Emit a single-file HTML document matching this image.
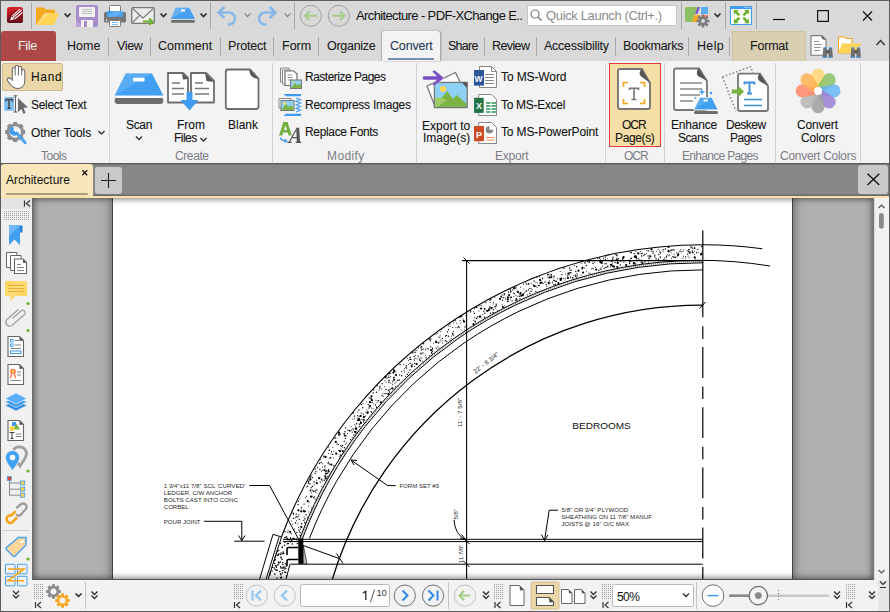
<!DOCTYPE html>
<html><head><meta charset="utf-8">
<style>
*{margin:0;padding:0;box-sizing:border-box}
html,body{width:890px;height:612px;overflow:hidden;background:#5c5c5c}
body{font-family:"Liberation Sans",sans-serif;font-size:12px;color:#1a1a1a;position:relative}
.a{position:absolute}
.t{position:absolute;white-space:nowrap;line-height:1}
svg{position:absolute;overflow:visible}
#title{left:1px;top:1px;width:888px;height:30px;background:#d9d9d9}
#tabs{left:1px;top:31px;width:888px;height:30px;background:#d9d9d9}
#ribbon{left:1px;top:61px;width:888px;height:102px;background:#f3f3f3}
#dtabs{left:1px;top:163px;width:888px;height:33px;background:repeating-conic-gradient(#818181 0 25%,#8f8f8f 0 50%) 0 0/2px 2px;box-shadow:inset 0 2px 2px -1px rgba(0,0,0,.45),inset 0 -2px 2px -1px rgba(0,0,0,.3)}
#yline{left:1px;top:196px;width:888px;height:2px;background:#f8e2aa}
#side{left:1px;top:198px;width:31px;height:413px;background:#f0f0f0}
#docbg{left:32px;top:198px;width:842px;height:382px;background:repeating-conic-gradient(#a9a9a9 0 25%,#b5b5b5 0 50%) 0 0/2px 2px}
#page{left:113px;top:198px;width:679px;height:381px;background:#fff;box-shadow:0 0 9px 2px rgba(0,0,0,.42),-1px 0 0 #5a5a5a,1px 0 0 #5a5a5a}
#vshade{left:32px;top:198px;width:842px;height:382px;box-shadow:inset 0 0 6px 1px rgba(0,0,0,.55);border-bottom:1px solid #555;border-left:1px solid #6a6a6a;border-right:1px solid #777}
#vscroll{left:874px;top:198px;width:15px;height:382px;background:#f1f1f1;border-left:1px solid #d8d8d8}
#bottom{left:32px;top:580px;width:857px;height:31px;background:#f2f2f2}
.sep{position:absolute;width:1px;background:#a8a8a8}
.gsep{position:absolute;width:1px;background:#d2d2d2;top:63px;height:99px}
.glab{position:absolute;top:150px;color:#7d7d86;font-size:12px;white-space:nowrap;line-height:1}
.tab{position:absolute;top:40px;font-size:12.5px;line-height:1;white-space:nowrap;color:#1a1a1a;-webkit-text-stroke:.08px #1a1a1a}
.rt{position:absolute;font-size:12px;line-height:1;white-space:nowrap;color:#111;-webkit-text-stroke:.08px #111}
</style></head><body>
<div class="a" id="title"></div>
<div class="a" id="tabs"></div>
<div class="a" id="ribbon"></div>
<div class="a" id="docbg"></div>

<div class="a" id="page"></div>
<!-- DRAWING -->
<svg style="left:0;top:0" width="890" height="580" viewBox="0 0 890 580">
<defs><clipPath id="pg"><rect x="113" y="198" width="679" height="381"/></clipPath></defs>
<g clip-path="url(#pg)">
<path d="M383.3 396.6h.01M426.2 357.4h.01M415.7 352.4h.01M486.5 310.5h.01M293.7 514.6h.01M516.0 295.6h.01M308.8 512.0h.01M536.0 286.0h.01M484.4 309.7h.01M636.7 259.9h.01M493.4 303.8h.01M616.3 254.7h.01M529.9 293.9h.01M516.5 286.1h.01M367.0 410.0h.01M294.6 529.1h.01M321.4 486.3h.01M321.9 479.2h.01M470.3 312.3h.01M388.8 375.8h.01M348.9 430.6h.01M364.0 422.6h.01M406.7 368.3h.01M515.5 300.5h.01M345.2 444.1h.01M307.5 517.3h.01M635.4 255.9h.01M312.1 477.7h.01M612.6 266.3h.01M676.5 252.8h.01M691.1 247.5h.01M581.9 268.7h.01M384.7 393.6h.01M459.7 327.6h.01M298.4 527.5h.01M539.4 276.9h.01M341.1 449.0h.01M648.9 250.9h.01M520.4 287.2h.01M523.6 284.2h.01M591.5 268.9h.01M674.1 250.2h.01M322.7 481.0h.01M692.2 250.3h.01M687.1 250.6h.01M667.3 254.7h.01M611.1 265.9h.01M371.5 408.0h.01M486.0 302.8h.01M464.8 329.7h.01M339.7 456.7h.01M473.7 311.8h.01M582.2 268.9h.01M574.3 265.5h.01M542.0 283.2h.01M437.6 333.2h.01M635.9 251.3h.01M474.5 308.8h.01M308.4 506.1h.01M322.5 463.9h.01M317.1 467.9h.01M441.3 329.7h.01M558.7 283.3h.01M429.5 355.7h.01M315.5 490.5h.01M586.5 271.1h.01M481.4 308.6h.01M298.1 504.7h.01M384.7 386.7h.01M364.2 419.3h.01M304.1 517.0h.01M453.3 334.9h.01M436.2 334.4h.01M606.7 263.8h.01M536.9 277.6h.01M612.9 258.7h.01M617.2 255.5h.01M436.1 347.9h.01M353.2 413.5h.01M473.7 320.4h.01M376.0 400.2h.01M401.7 371.5h.01M338.7 444.6h.01M363.5 421.2h.01M347.6 430.0h.01M570.4 270.3h.01M450.1 326.1h.01M610.1 260.9h.01M535.9 282.2h.01M450.1 340.2h.01M527.5 294.9h.01M561.5 279.7h.01M440.1 335.8h.01M503.8 297.5h.01M690.9 246.5h.01M321.5 471.3h.01M375.7 405.3h.01M663.1 251.2h.01M359.2 416.6h.01M671.0 252.8h.01M571.5 270.2h.01M440.0 341.7h.01M524.7 292.7h.01M409.6 370.0h.01M339.6 432.7h.01M353.4 430.2h.01M642.1 253.1h.01M414.1 359.4h.01M685.7 258.0h.01M508.6 291.8h.01M635.9 264.1h.01M493.8 312.6h.01M688.0 256.2h.01M325.0 465.5h.01M659.7 252.4h.01M546.6 286.4h.01M461.0 323.0h.01M344.4 433.8h.01M448.7 329.8h.01M354.6 418.8h.01M352.2 437.4h.01M415.4 355.3h.01M594.2 262.5h.01M334.2 438.7h.01M576.9 273.5h.01M451.4 336.1h.01M689.1 257.7h.01M303.4 511.0h.01M640.1 253.6h.01M668.2 250.3h.01M365.8 412.3h.01M388.6 377.3h.01M425.9 358.0h.01M393.9 370.2h.01M390.8 373.6h.01M304.5 522.8h.01M660.3 257.8h.01M648.8 257.9h.01M554.6 280.5h.01M329.5 450.2h.01M607.7 258.8h.01M383.0 393.4h.01M588.8 273.1h.01M573.2 275.3h.01M692.1 247.2h.01M363.8 420.9h.01M448.5 329.4h.01M531.2 283.3h.01M565.9 278.3h.01M698.8 252.4h.01M616.7 255.0h.01M373.1 408.8h.01M354.2 416.6h.01M379.0 390.1h.01M475.4 322.2h.01M392.9 381.1h.01M407.7 358.3h.01M513.7 288.6h.01M663.4 259.6h.01M597.6 258.5h.01M311.9 475.2h.01M610.4 266.8h.01M346.3 436.2h.01M408.5 364.4h.01M648.7 262.0h.01M576.4 277.3h.01M510.6 299.2h.01M488.8 308.7h.01M428.4 349.0h.01M425.8 349.8h.01M584.9 268.1h.01M453.5 331.5h.01M315.6 471.3h.01M560.2 271.4h.01M666.1 259.9h.01M448.5 325.8h.01M358.3 417.9h.01M325.6 456.8h.01M640.8 262.2h.01M353.4 412.6h.01M390.6 376.5h.01M328.5 453.5h.01M694.2 251.3h.01M322.4 467.1h.01M453.4 322.9h.01M394.8 383.1h.01M442.8 343.2h.01M356.1 429.2h.01M512.8 289.7h.01M518.8 293.2h.01M563.4 278.4h.01M297.9 518.0h.01M355.3 432.6h.01M452.7 327.5h.01M333.4 458.0h.01M293.6 513.5h.01M432.6 349.4h.01M569.8 270.0h.01M552.4 282.0h.01M420.9 348.8h.01M339.0 434.3h.01M360.6 421.4h.01M639.1 259.3h.01M525.6 282.3h.01M616.8 258.0h.01M421.9 349.1h.01M377.0 402.3h.01M300.0 498.9h.01M300.7 529.1h.01M391.1 388.6h.01M295.1 518.1h.01M542.7 278.8h.01M492.9 307.4h.01M605.6 257.6h.01M291.2 520.8h.01M422.7 361.3h.01M414.5 360.6h.01M386.1 382.2h.01M607.9 267.2h.01M595.9 269.8h.01M384.9 380.8h.01M545.1 281.4h.01M516.5 299.7h.01M392.5 381.9h.01M298.9 529.3h.01M650.0 255.5h.01M463.0 318.9h.01M519.7 294.2h.01M431.1 339.1h.01M338.4 450.5h.01M355.3 426.0h.01M689.4 249.4h.01M682.9 258.4h.01M694.1 248.4h.01M425.6 355.6h.01M297.8 523.8h.01M437.9 346.8h.01M408.4 360.3h.01M420.3 353.2h.01M432.5 348.0h.01M311.7 492.7h.01M418.7 356.7h.01M331.5 451.4h.01M404.4 368.7h.01M296.5 520.8h.01M585.5 261.9h.01M554.0 277.9h.01M403.3 364.5h.01M694.5 254.5h.01M417.0 358.8h.01M392.5 384.6h.01M564.5 268.2h.01M340.6 434.1h.01M346.6 443.0h.01M387.6 377.7h.01M340.5 455.5h.01M525.9 291.2h.01M358.8 427.0h.01M541.6 282.2h.01M361.9 419.7h.01M451.2 338.4h.01M322.7 470.3h.01M465.8 315.4h.01M618.0 261.0h.01M513.5 292.8h.01M440.9 331.6h.01M460.1 320.5h.01M423.8 353.1h.01M590.0 273.4h.01M660.6 252.9h.01M589.5 261.3h.01M503.7 297.7h.01M493.6 302.1h.01M529.2 288.4h.01M315.9 492.8h.01M581.8 263.3h.01M419.2 358.8h.01M440.8 339.9h.01M310.3 477.4h.01M556.3 280.9h.01M340.3 454.4h.01M550.6 274.2h.01M305.6 497.7h.01M683.5 249.8h.01M309.0 502.2h.01M323.9 457.4h.01M423.0 349.1h.01M595.6 267.4h.01M482.4 314.4h.01M381.6 388.9h.01M612.7 260.2h.01M416.9 350.4h.01M537.3 282.9h.01M601.2 267.2h.01M603.7 258.1h.01M599.7 261.9h.01M666.5 257.6h.01M352.8 419.1h.01M436.8 348.6h.01M647.0 250.5h.01M439.8 337.6h.01M461.1 330.1h.01M300.6 532.6h.01M354.8 415.9h.01M673.9 249.6h.01M683.4 256.3h.01M342.7 447.3h.01M299.0 514.4h.01M429.0 339.6h.01M309.9 478.2h.01M478.9 311.0h.01M320.7 459.5h.01M386.1 378.2h.01M670.1 251.1h.01M490.8 302.4h.01M555.5 281.9h.01M664.4 257.9h.01M298.0 510.6h.01M317.7 467.2h.01M308.1 480.8h.01M646.4 253.6h.01M442.7 340.7h.01M340.6 445.5h.01M363.0 403.2h.01M559.7 279.0h.01M288.1 530.2h.01M328.0 476.1h.01M552.6 282.9h.01M306.6 496.4h.01M365.4 416.1h.01M547.8 275.8h.01M602.6 266.1h.01M630.5 258.4h.01M497.3 310.6h.01M427.3 348.5h.01M551.3 274.5h.01M573.2 277.9h.01M685.5 256.6h.01M315.2 491.6h.01M485.3 309.1h.01M306.7 487.1h.01M304.2 520.1h.01M414.4 366.4h.01M629.5 263.3h.01M669.5 255.2h.01M671.1 249.7h.01M692.6 248.3h.01M603.4 258.8h.01M354.8 424.4h.01M394.5 377.3h.01M668.9 251.8h.01M640.3 251.4h.01M517.9 296.3h.01M508.2 301.2h.01M418.5 347.9h.01M356.8 429.9h.01M522.5 295.2h.01M433.4 343.1h.01M438.9 343.1h.01M629.7 262.0h.01M448.7 336.3h.01M366.6 401.9h.01M298.0 504.6h.01M303.9 510.2h.01M565.0 279.9h.01M680.8 249.6h.01M456.8 323.2h.01M634.9 264.5h.01M634.6 256.1h.01M430.6 347.0h.01M369.8 406.6h.01M404.3 372.0h.01M615.3 254.7h.01M415.8 350.8h.01M659.8 250.7h.01M701.9 252.2h.01M533.5 285.6h.01M481.8 305.6h.01M605.9 267.6h.01M691.1 248.0h.01M605.9 256.2h.01M455.9 327.7h.01M331.6 451.8h.01M371.5 398.1h.01M369.0 397.6h.01M416.7 364.6h.01M485.3 302.3h.01M648.2 251.3h.01M494.9 297.2h.01M676.1 256.8h.01M355.8 429.1h.01M328.5 447.1h.01M481.2 318.0h.01M404.0 370.7h.01M312.6 477.6h.01M355.5 433.0h.01M389.7 389.7h.01M312.6 496.3h.01M557.3 278.7h.01M335.3 437.6h.01M347.4 433.5h.01M502.2 304.8h.01M316.7 480.2h.01M357.8 412.3h.01M523.9 289.1h.01M408.7 372.5h.01M452.5 333.4h.01M378.0 400.8h.01M554.8 280.9h.01M653.6 251.3h.01M292.7 524.2h.01M390.8 383.4h.01M388.8 380.9h.01M309.3 480.8h.01M405.6 376.3h.01M516.8 298.1h.01M421.3 350.3h.01M284.7 537.7h.01M371.4 412.5h.01M656.7 251.3h.01M543.2 283.6h.01M612.2 264.7h.01M674.1 254.4h.01M544.9 282.5h.01M664.8 259.2h.01M295.3 517.1h.01M357.3 418.2h.01M548.1 277.8h.01M351.2 426.8h.01M668.6 255.8h.01M641.8 261.5h.01M577.4 275.1h.01M396.2 382.0h.01M367.8 413.3h.01M431.8 352.1h.01M311.5 508.0h.01M473.6 324.3h.01M517.2 291.2h.01M327.3 476.6h.01M617.8 263.4h.01M512.8 290.0h.01M474.7 317.8h.01M508.2 292.6h.01M453.3 335.3h.01M328.6 461.9h.01M315.1 499.3h.01M332.9 447.3h.01M617.0 255.8h.01M457.8 327.7h.01M423.1 349.3h.01M652.0 259.9h.01M425.8 348.9h.01M342.2 450.6h.01M629.9 251.8h.01M533.1 284.5h.01M479.9 305.5h.01M520.5 294.6h.01M415.1 358.4h.01M410.9 369.9h.01M629.8 261.8h.01M477.0 318.7h.01M314.2 484.8h.01M551.6 275.2h.01M612.7 263.1h.01M681.3 252.0h.01M316.8 471.7h.01M351.4 430.1h.01M495.7 308.2h.01M549.5 280.8h.01M658.1 249.5h.01M569.1 275.2h.01M395.8 371.9h.01M359.2 424.2h.01M299.5 532.0h.01M333.4 451.2h.01M539.6 285.2h.01M390.1 389.4h.01M634.4 253.5h.01M620.5 261.5h.01M504.3 305.8h.01M338.6 434.5h.01M303.2 520.5h.01M436.1 340.6h.01M395.7 386.6h.01M695.6 258.9h.01M532.1 289.9h.01M634.0 253.9h.01M513.9 296.7h.01M592.9 260.9h.01M537.1 287.4h.01M565.4 274.1h.01M431.0 346.8h.01M375.5 404.9h.01M373.7 403.9h.01M660.5 253.2h.01M331.1 453.9h.01M389.2 377.6h.01M548.9 284.0h.01M683.0 251.4h.01M600.3 259.1h.01M324.6 476.3h.01M636.0 255.5h.01M389.3 392.1h.01M439.0 348.2h.01M314.4 496.7h.01M581.1 275.1h.01M417.8 355.9h.01M549.9 275.8h.01M432.5 348.6h.01M671.5 258.6h.01M438.9 337.1h.01M575.7 276.7h.01" stroke="#000" stroke-width="1.0" stroke-linecap="round" opacity="1"/>
<path d="M304.1 504.1h.01M344.0 433.8h.01M327.6 473.3h.01M606.0 267.5h.01M490.0 307.6h.01M593.0 263.4h.01M324.8 466.9h.01M528.2 284.3h.01M635.0 263.4h.01M630.7 261.3h.01M328.6 469.8h.01M535.8 291.5h.01M584.8 263.0h.01M313.4 491.4h.01M356.6 423.8h.01M313.9 491.2h.01M694.6 247.6h.01M605.4 259.8h.01M397.7 380.3h.01M570.9 272.7h.01M687.7 254.1h.01M601.1 269.1h.01M475.2 321.3h.01M654.9 257.0h.01M658.8 254.5h.01M330.7 457.7h.01M477.4 316.9h.01M502.5 300.2h.01M325.6 476.6h.01M528.7 283.8h.01M328.1 463.0h.01M388.4 390.2h.01M694.7 248.5h.01M414.0 352.3h.01M298.4 501.4h.01M598.8 270.5h.01M370.1 398.2h.01M296.9 532.5h.01M561.9 274.6h.01M615.0 262.6h.01M412.0 364.5h.01M324.4 480.3h.01M359.8 424.1h.01M304.9 522.4h.01M638.4 258.6h.01M519.9 298.7h.01M644.8 254.4h.01M604.1 268.5h.01M307.7 486.3h.01M569.8 272.7h.01M359.8 426.3h.01M326.6 470.8h.01M305.3 511.6h.01M540.6 280.5h.01M458.4 326.7h.01M430.3 340.8h.01M673.9 257.4h.01M315.1 473.3h.01M641.9 253.7h.01M648.1 255.9h.01M290.5 538.3h.01M373.2 392.9h.01M569.7 268.0h.01M369.0 408.0h.01M305.1 518.7h.01M361.3 404.4h.01M393.8 369.6h.01M602.4 262.0h.01M296.2 514.0h.01M293.2 513.0h.01M563.1 268.1h.01M335.8 438.1h.01M432.3 351.2h.01M389.4 391.9h.01M423.6 343.7h.01M548.3 274.4h.01M663.2 249.6h.01M671.2 250.4h.01M293.3 518.6h.01M321.5 479.8h.01M372.1 402.4h.01M515.8 288.0h.01M352.2 432.1h.01M607.8 266.4h.01M414.1 356.8h.01M666.4 256.3h.01M528.4 289.9h.01M386.0 393.4h.01M310.8 476.4h.01M410.2 357.4h.01M680.0 251.4h.01M286.5 536.7h.01M510.3 289.8h.01M349.2 430.5h.01M421.0 354.1h.01M295.5 522.9h.01M350.0 430.9h.01M529.7 293.1h.01M368.2 404.5h.01M356.6 428.5h.01M312.1 490.2h.01M688.3 251.5h.01M311.2 487.7h.01M345.4 438.4h.01M342.6 445.4h.01M378.6 400.6h.01M406.4 365.7h.01M313.7 497.7h.01M414.7 363.4h.01M677.9 255.7h.01M701.0 254.4h.01M333.8 465.8h.01M325.8 471.3h.01M446.8 341.6h.01M400.1 364.7h.01M612.7 266.0h.01M320.3 482.1h.01M314.2 482.0h.01M505.6 298.9h.01M576.6 266.7h.01M332.7 454.4h.01M693.0 252.7h.01M658.3 259.3h.01M575.3 275.9h.01M358.9 410.0h.01M301.6 523.8h.01M463.5 320.5h.01M511.4 297.4h.01M607.7 266.1h.01M345.0 431.8h.01M292.4 539.6h.01M493.3 309.7h.01M291.2 533.6h.01M555.4 284.6h.01M353.9 435.0h.01M357.6 415.6h.01M672.9 250.0h.01M653.1 253.3h.01M631.3 252.4h.01M316.9 489.9h.01M511.0 291.2h.01M371.1 411.6h.01M575.7 275.1h.01M362.7 407.7h.01M373.7 389.8h.01M290.6 538.0h.01M672.9 256.4h.01M542.6 278.2h.01M645.0 261.9h.01M641.3 260.3h.01M321.1 462.5h.01M620.3 264.9h.01M329.3 464.0h.01M316.9 490.0h.01M542.1 282.5h.01M419.7 360.0h.01M410.9 359.4h.01M310.4 490.1h.01M611.7 261.5h.01M675.2 257.3h.01M363.4 414.1h.01M601.1 262.3h.01M480.7 316.5h.01M389.1 380.4h.01M605.1 263.7h.01M475.1 321.5h.01M401.7 375.7h.01M442.4 338.4h.01M651.9 251.3h.01M612.6 259.7h.01M285.0 531.7h.01M345.6 427.9h.01M319.5 463.3h.01M324.0 456.3h.01M586.2 265.5h.01M589.2 262.4h.01M421.1 347.0h.01M526.3 284.0h.01M412.2 353.0h.01M377.1 385.8h.01M554.0 276.3h.01M629.3 260.3h.01M410.2 363.2h.01M449.9 323.9h.01M593.0 268.5h.01M641.6 256.0h.01M376.6 407.2h.01M480.5 316.1h.01M484.4 317.2h.01M432.0 353.7h.01M489.9 300.2h.01M519.6 296.3h.01M300.1 535.3h.01M430.1 339.0h.01M303.7 511.4h.01M511.3 297.2h.01M587.9 261.2h.01M688.7 249.8h.01M359.3 418.6h.01M613.1 257.2h.01M484.9 313.3h.01M393.6 377.5h.01M510.6 292.0h.01M496.2 305.9h.01M631.3 258.3h.01M301.4 507.7h.01M530.9 288.6h.01M350.6 439.6h.01M306.1 514.8h.01M382.2 395.5h.01M445.3 340.8h.01M319.9 469.5h.01M630.8 252.8h.01M431.6 352.6h.01M618.4 258.7h.01M382.2 383.7h.01M512.1 300.9h.01M448.3 336.1h.01M701.8 246.5h.01M464.9 326.9h.01M656.1 258.7h.01M325.1 475.7h.01M344.5 447.8h.01M410.0 359.3h.01M654.8 255.3h.01M363.1 419.4h.01M399.2 380.0h.01M376.4 392.2h.01M678.2 253.2h.01M301.5 527.6h.01M452.8 333.5h.01M570.4 277.3h.01M617.3 260.3h.01M352.9 428.9h.01M455.0 320.8h.01M422.1 352.9h.01M315.0 468.9h.01M361.4 413.1h.01M371.4 399.1h.01M490.9 299.3h.01M617.1 259.2h.01M493.0 312.8h.01M386.0 389.5h.01M502.2 295.1h.01M575.8 271.3h.01M547.7 274.4h.01M489.9 307.0h.01M483.9 311.6h.01M622.6 259.7h.01M484.4 308.7h.01M660.3 256.9h.01M298.2 516.1h.01M538.6 285.5h.01M495.0 306.5h.01M399.6 374.9h.01M445.4 336.1h.01M700.7 254.7h.01M308.3 483.2h.01M420.3 360.8h.01M299.3 519.6h.01M531.1 291.4h.01M476.4 318.4h.01M577.1 276.1h.01M329.5 458.1h.01M500.9 296.4h.01M287.9 532.2h.01M553.8 280.2h.01M364.2 420.1h.01M407.3 374.3h.01M507.7 301.5h.01M665.3 249.0h.01M556.0 281.4h.01M318.9 478.4h.01M600.2 269.1h.01M549.8 283.0h.01M623.8 261.9h.01M312.5 486.4h.01M629.6 263.5h.01M546.2 284.6h.01M553.8 284.7h.01M309.9 483.7h.01M510.3 297.1h.01M514.3 293.8h.01M303.8 511.6h.01M341.2 446.1h.01M380.0 386.2h.01M496.2 304.2h.01M438.3 342.7h.01M572.6 277.8h.01M692.2 251.7h.01M446.4 335.4h.01M523.3 294.0h.01M567.5 275.9h.01M610.3 264.6h.01M356.1 432.0h.01M490.4 313.2h.01M421.0 357.9h.01M429.7 338.6h.01M504.2 294.7h.01M535.0 286.1h.01M526.5 290.9h.01M643.9 255.6h.01M466.3 324.9h.01M421.7 346.8h.01M697.8 249.4h.01M504.4 293.7h.01M534.0 281.0h.01M310.4 490.9h.01M308.5 481.8h.01M616.3 259.7h.01M636.2 256.8h.01M599.4 258.3h.01M329.2 450.3h.01M406.0 367.5h.01M452.6 334.0h.01M459.9 317.6h.01M295.4 522.7h.01M389.0 382.4h.01M696.6 252.7h.01M355.1 428.6h.01M326.8 478.1h.01M470.7 311.2h.01M633.4 263.8h.01M649.2 258.7h.01M299.1 530.6h.01M337.2 444.0h.01M344.2 441.2h.01M296.8 516.7h.01M447.5 331.9h.01M501.8 297.2h.01M474.4 313.4h.01M379.7 388.0h.01" stroke="#000" stroke-width="1.4" stroke-linecap="round"/>
<path d="M301.3 511.3h.01M561.2 278.6h.01M316.8 483.2h.01M396.0 375.1h.01M540.6 282.9h.01M436.2 342.2h.01M473.5 324.0h.01M359.3 419.9h.01M668.5 246.9h.01M358.1 420.2h.01M479.7 316.7h.01M338.9 432.5h.01M507.9 297.4h.01M361.0 422.9h.01M298.6 510.3h.01M355.0 431.8h.01M367.7 412.4h.01M694.7 257.4h.01M301.2 526.8h.01M509.1 295.1h.01M689.8 252.7h.01M371.9 400.2h.01M310.4 479.4h.01M431.0 350.0h.01M394.1 379.7h.01M311.1 496.7h.01M363.9 416.9h.01M578.5 270.7h.01M548.6 282.8h.01M324.5 470.2h.01M678.2 254.7h.01M487.5 311.0h.01M600.5 262.1h.01M394.3 370.9h.01M523.1 294.8h.01M560.8 279.9h.01M650.3 256.5h.01M507.9 299.5h.01M319.3 478.2h.01M516.4 299.7h.01M668.5 251.2h.01M634.8 256.8h.01M380.9 402.4h.01M411.7 366.3h.01M517.8 291.9h.01M326.0 473.6h.01M568.4 273.7h.01M623.2 257.9h.01M339.1 434.6h.01M335.8 441.9h.01M568.0 278.0h.01M582.5 267.8h.01M638.2 253.3h.01M623.6 257.0h.01M551.4 277.1h.01M367.4 412.7h.01M626.2 265.2h.01M500.0 298.8h.01M611.1 264.8h.01M369.9 402.2h.01M393.4 372.6h.01M514.1 288.1h.01M601.7 262.9h.01M633.9 262.9h.01M290.2 531.8h.01M392.4 388.4h.01M596.2 269.5h.01M534.4 286.1h.01M583.1 272.5h.01M340.1 451.2h.01M701.3 254.2h.01M617.3 267.0h.01M549.5 277.6h.01M416.6 364.0h.01M617.7 262.9h.01M464.1 321.7h.01M342.9 451.3h.01M360.6 415.9h.01M328.6 471.4h.01M369.9 406.1h.01M344.9 435.5h.01M336.2 453.7h.01M385.6 376.8h.01M461.2 316.1h.01M489.2 309.7h.01M636.2 257.6h.01M356.1 428.3h.01M491.5 308.1h.01M331.3 464.6h.01M481.1 308.5h.01M502.9 307.0h.01M540.0 279.9h.01M613.9 266.7h.01M325.6 456.9h.01M651.4 249.2h.01M642.3 263.0h.01M307.7 501.2h.01M558.4 283.0h.01M388.3 394.0h.01M304.3 511.3h.01M521.4 295.7h.01M520.6 293.0h.01M476.4 307.0h.01M371.5 396.3h.01M389.2 373.3h.01M325.7 478.4h.01" stroke="#000" stroke-width="2.2" stroke-linecap="round"/>
<path d="M274.3 560.4h.01M278.9 563.0h.01M287.9 539.8h.01M288.4 543.5h.01M284.3 568.9h.01M289.5 539.8h.01M279.8 571.4h.01M281.6 577.2h.01M296.8 541.2h.01M283.8 553.6h.01M278.3 562.2h.01M286.4 575.9h.01M280.4 543.5h.01M276.3 570.1h.01M296.5 538.9h.01M287.5 538.9h.01M287.0 538.3h.01M287.4 543.7h.01M277.0 578.2h.01M282.1 559.4h.01M285.6 563.7h.01M281.1 568.0h.01M285.2 537.5h.01M280.5 561.9h.01M288.1 539.6h.01M278.7 550.4h.01M278.9 562.6h.01M276.5 553.2h.01M293.0 538.2h.01M285.9 568.6h.01M290.4 541.4h.01M277.3 551.4h.01M277.8 565.0h.01M284.5 545.2h.01M278.1 554.9h.01M280.7 554.6h.01M281.2 577.9h.01M294.4 538.9h.01M280.5 577.4h.01M274.8 574.1h.01M282.7 570.6h.01M284.7 572.1h.01M272.0 571.0h.01M275.4 559.7h.01M280.8 557.3h.01M278.3 564.8h.01M279.1 563.0h.01M281.1 553.0h.01M283.4 567.2h.01M280.7 566.8h.01M282.1 547.5h.01M284.8 566.9h.01M280.9 574.8h.01M275.2 557.0h.01M270.3 572.0h.01M293.1 538.9h.01M270.2 573.3h.01M294.0 538.6h.01M291.0 541.6h.01M285.7 572.6h.01M274.7 563.5h.01M278.9 554.1h.01M278.3 555.0h.01M292.2 543.9h.01M282.9 564.6h.01M297.4 543.4h.01M281.5 567.9h.01M276.4 567.3h.01M280.5 573.7h.01M282.8 553.5h.01M277.3 570.3h.01M282.8 562.8h.01M282.4 572.9h.01M282.8 568.0h.01M282.4 546.9h.01M274.2 567.9h.01M272.6 567.3h.01M274.9 574.2h.01M277.0 555.2h.01M291.5 540.7h.01M286.3 566.0h.01M281.3 557.9h.01M285.1 542.1h.01M275.6 565.6h.01M269.9 575.1h.01M297.8 541.2h.01M276.3 566.1h.01M275.3 569.4h.01M284.8 541.9h.01M283.3 552.1h.01" stroke="#000" stroke-width="1.5" stroke-linecap="round"/>
<path d="M281.46 537.00 A450.60 450.60 0 0 1 762.30 248.68" stroke="#000" stroke-width="1.1" fill="none" />
<path d="M299.83 538.50 A427.20 427.20 0 0 1 770.00 266.04" stroke="#000" stroke-width="1.0" fill="none" />
<path d="M302.31 539.00 A424.70 424.70 0 0 1 702.80 262.81" stroke="#000" stroke-width="1.0" fill="none" />
<path d="M300.97 539.00 A425.95 425.95 0 0 1 702.80 261.56" stroke="#000" stroke-width="1.3" fill="none" stroke-dasharray="0.7 1.3" opacity=".6"/>
<path d="M309.39 538.50 A419.20 419.20 0 0 1 702.80 269.91" stroke="#000" stroke-width="1.0" fill="none" />
<path d="M332.27 579.50 A386.00 386.00 0 0 1 702.80 305.20" stroke="#000" stroke-width="1.3" fill="none" />
<path d="M702.8 230.5 V317.2" stroke="#000" stroke-width="1.2"/>
<path d="M702.8 326.3 V580" stroke="#000" stroke-width="1.2" stroke-dasharray="12.6 8.1 30.9 8.6"/>
<path d="M462 260.6 H702.8 M466.6 260.6 V580" stroke="#000" stroke-width="1.1"/>
<path d="M463.5 257.5 L469.5 263.5 M699.5 308.5 L705.5 302 M463.5 538 L469.5 544 M463.5 561 L469.5 567" stroke="#000" stroke-width="1"/>
<path d="M283 539.3 H702.8 M283 541.6 H702.8 M290 564.2 H702.8" stroke="#000" stroke-width="1"/>
<path d="M273 534.3 L259.5 579.5 M273 534.3 L281.5 537 M281.5 537 L268 579.5 M279 537.2 L266 579.5" stroke="#000" stroke-width="1"/>
<path d="M289.9 564.4 L286 579.5" stroke="#000" stroke-width="1"/>
<path d="M234.2 541.2 H264.6 M203.9 521.3 H241.8 V540.7 M238.5 535.5 L241.8 540.7 L245 535.5" stroke="#000" stroke-width="1" fill="none"/>
<path d="M249.4 485.5 H269.6 L298.5 539" stroke="#000" stroke-width="1" fill="none"/>
<path d="M351 460 L387.6 485.6 H395.8 M351 460 L357 460.5 M351 460 L354 465" stroke="#000" stroke-width="1" fill="none"/>
<rect x="298.3" y="538.5" width="5" height="25.3" fill="#000"/>
<path d="M303.3 545 L307 563.8 H303.3Z" fill="#bbb" stroke="#000" stroke-width=".6"/>
<path d="M298.3 547.5 H288.5 Q287 547.5 287 549.5 V555 M298.3 559.5 H288.5 Q287 559.5 287 561.5 V566" stroke="#000" stroke-width="1.6" fill="none"/>
<path d="M303.3 545.5 L340 558.8 M336.5 553.5 L343 563.5" stroke="#000" stroke-width="1" fill="none"/>
<path d="M558 510.2 H549.2 L544.5 540.5 M541.5 534.5 L544.5 540.5 L547.8 535" stroke="#000" stroke-width="1" fill="none"/>
<path d="M454 520 Q455 535 466 540 M460 538.5 L466 540 L461.5 534.5" stroke="#000" stroke-width="1" fill="none"/>
</g>
<text x="572.3" y="429.2" font-family="Liberation Sans" font-size="9.6" fill="#111" textLength="58.5" lengthAdjust="spacingAndGlyphs">BEDROOMS</text>
<text x="163.8" y="488.1" font-family="Liberation Sans" fill="#2a2a2a" font-size="6" textLength="81.4" lengthAdjust="spacingAndGlyphs">1 3/4&quot;x11 7/8&quot; SCL 'CURVED'</text>
<text x="163.8" y="495" font-family="Liberation Sans" fill="#2a2a2a" font-size="6" textLength="68.4" lengthAdjust="spacingAndGlyphs">LEDGER, C/W ANCHOR</text>
<text x="163.8" y="502" font-family="Liberation Sans" fill="#2a2a2a" font-size="6" textLength="74.1" lengthAdjust="spacingAndGlyphs">BOLTS CAST INTO CONC</text>
<text x="163.8" y="509" font-family="Liberation Sans" fill="#2a2a2a" font-size="6" textLength="24.9" lengthAdjust="spacingAndGlyphs">CORBEL</text>
<text x="163.8" y="523.9" font-family="Liberation Sans" fill="#2a2a2a" font-size="6" textLength="36.7" lengthAdjust="spacingAndGlyphs">POUR JOINT</text>
<text x="399.4" y="488" font-family="Liberation Sans" fill="#2a2a2a" font-size="6" textLength="39.6" lengthAdjust="spacingAndGlyphs">FORM SET #3</text>
<text x="561.5" y="512.2" font-family="Liberation Sans" fill="#2a2a2a" font-size="6" textLength="66.8" lengthAdjust="spacingAndGlyphs">5/8&quot; OR 3/4&quot; PLYWOOD</text>
<text x="561.5" y="519" font-family="Liberation Sans" fill="#2a2a2a" font-size="6" textLength="90.5" lengthAdjust="spacingAndGlyphs">SHEATHING ON 11 7/8&quot; MANUF</text>
<text x="561.5" y="526" font-family="Liberation Sans" fill="#2a2a2a" font-size="6" textLength="67.5" lengthAdjust="spacingAndGlyphs">JOISTS @ 16&quot; O/C MAX</text>
<text transform="translate(475.5,374) rotate(-38.5)" font-family="Liberation Sans" fill="#2a2a2a" font-size="6.4">22' - 8 3/4&quot;</text>
<text transform="translate(461.5,427) rotate(-90)" font-family="Liberation Sans" fill="#2a2a2a" font-size="6.2">11' - 7 5/8&quot;</text>
<text transform="translate(457.5,519.5) rotate(-90)" font-family="Liberation Sans" fill="#2a2a2a" font-size="6">5/8&quot;</text>
<text transform="translate(462.5,563) rotate(-90)" font-family="Liberation Sans" fill="#2a2a2a" font-size="6">11 7/8&quot;</text>
</svg>
<!-- /DRAWING -->
<div class="a" id="vshade"></div>
<div class="a" id="dtabs"></div>
<div class="a" id="yline"></div>
<div class="a" id="side"></div>
<div class="a" id="vscroll"></div>
<div class="a" id="bottom"></div>

<!-- TITLEBAR -->
<div class="sep" style="left:31px;top:2px;height:27px"></div>
<div class="sep" style="left:210px;top:2px;height:27px"></div>
<div class="sep" style="left:294px;top:2px;height:27px"></div>
<div class="t" style="left:356px;top:9px;font-size:13px;color:#111;letter-spacing:-0.621px">Architecture - PDF-XChange E..</div>
<div class="a" style="left:527px;top:5px;width:150px;height:21px;background:#fff;border:1px solid #c4c4c4;border-radius:2px"></div>
<div class="t" style="left:546px;top:9px;font-size:13px;color:#8a8a8a;letter-spacing:-0.350px">Quick Launch (Ctrl+.)</div>
<div class="sep" style="left:681px;top:2px;height:27px"></div>
<div class="sep" style="left:725px;top:2px;height:27px"></div>


<!-- TITLE ICONS -->
<svg style="left:0;top:0" width="890" height="31">
 <!-- logo -->
 <defs>
  <linearGradient id="lg1" x1="0" y1="0" x2="0" y2="1"><stop offset="0" stop-color="#d8232a"/><stop offset=".55" stop-color="#b01c25"/><stop offset="1" stop-color="#5c0a14"/></linearGradient>
 </defs>
 <rect x="7" y="7" width="16" height="16" rx="2.5" fill="url(#lg1)"/>
 <path d="M7 17 L15 10 H23 V20.5 Q23 23 20.5 23 H9.5 Q7 23 7 20.5Z" fill="#6a0c18" opacity=".55"/>
 <path d="M13 17.5 L21.8 10.2 M14.6 19 L22.6 12.4 M12.2 15.8 L20.2 9.2" stroke="#fff" stroke-width="1.1"/>
 <path d="M10 20.5 L11.6 16.2 L14.3 19.1Z" fill="#fff"/>
 <!-- folder -->
 <path d="M36 25 V7.5 H44 L46 9.5 H55 V13 Z" fill="#f4a822"/>
 <path d="M36 25 L44.5 13 H59 L54 25 Z" fill="#ffd356"/>
 <path d="M36 25 L44.5 13 H50 L38 25Z" fill="#ffe08a" opacity=".6"/>
 <!-- chevrons -->
 <path d="M64.5 13.5 L67.5 16.5 L70.5 13.5" stroke="#2a2a2a" stroke-width="1.6" fill="none"/>
 <!-- save -->
 <rect x="76" y="5" width="22" height="22" rx="2" fill="#a68cc9"/>
 <path d="M76 20 L83 27 H78 Q76 27 76 25Z" fill="#b9a3d8"/>
 <rect x="79" y="7" width="16" height="10" rx="1" fill="#f1f1f1"/>
 <path d="M82 9.5H92M82 11.5H92M82 13.5H92" stroke="#b4b4b4" stroke-width=".8"/>
 <rect x="81" y="20" width="12" height="7" fill="#f1f1f1"/>
 <rect x="84" y="21" width="3" height="6" fill="#a68cc9"/>
 <!-- printer -->
 <rect x="109.5" y="5.5" width="11" height="7" rx="1" fill="#fff" stroke="#7a7a7a"/>
 <rect x="104" y="12" width="22" height="10.5" rx="1.5" fill="#777"/>
 <rect x="107" y="11" width="16" height="5.8" fill="#49a0f0"/>
 <path d="M107 16.8 L114 11 H123 L116 16.8Z" fill="#6fb5f5" opacity=".7"/>
 <circle cx="106.5" cy="20.3" r=".8" fill="#fff"/>
 <rect x="109.5" y="20.5" width="11" height="6" rx="1" fill="#fff" stroke="#7a7a7a"/>
 <path d="M112 22.5H118M112 24.5H118" stroke="#6ab8ee" stroke-width=".9"/>
 <!-- envelope -->
 <rect x="131.7" y="7.7" width="22.6" height="15.6" rx="1" fill="#ececec" stroke="#777" stroke-width="1.3"/>
 <path d="M132.5 8.5 L143 18 L153.5 8.5 M132.5 22.5 L139.5 15.5" stroke="#777" stroke-width="1.1" fill="none"/>
 <path d="M143 21.5 H152 M149 18.5 L152.5 21.5 L149 24.8" stroke="#6ab42d" stroke-width="2" fill="none"/>
 <path d="M160.5 13.5 L163.5 16.5 L166.5 13.5" stroke="#2a2a2a" stroke-width="1.6" fill="none"/>
 <!-- scanner -->
 <path d="M175.6 7.8 H189.3 L195 18.9 H171 Z" fill="#47a0f0"/>
 <path d="M175.6 7.8 H189.3 L171 18.9 Z" fill="#7cbcf6" opacity=".55"/>
 <rect x="181" y="9.6" width="4" height="2" rx=".5" fill="#fff"/>
 <rect x="171" y="20" width="24" height="2.8" rx="1.4" fill="#6d6d6d"/>
 <path d="M200.5 13.5 L203.5 16.5 L206.5 13.5" stroke="#2a2a2a" stroke-width="1.6" fill="none"/>
 <!-- undo -->
 <path d="M219 12.5 H229 A6 6 0 0 1 229 24.5 H227.5" stroke="#89b8e8" stroke-width="2.6" fill="none"/>
 <path d="M224.5 7 L218.5 12.5 L224.5 18" stroke="#89b8e8" stroke-width="2.6" fill="none"/>
 <path d="M244.5 13.5 L247.5 16.5 L250.5 13.5" stroke="#8a8a8a" stroke-width="1.3" fill="none"/>
 <!-- redo -->
 <path d="M275 12.5 H265 A6 6 0 0 0 265 24.5 H266.5" stroke="#89b8e8" stroke-width="2.6" fill="none"/>
 <path d="M269.5 7 L275.5 12.5 L269.5 18" stroke="#89b8e8" stroke-width="2.6" fill="none"/>
 <path d="M284.5 13.5 L287.5 16.5 L290.5 13.5" stroke="#8a8a8a" stroke-width="1.3" fill="none"/>
 <!-- nav -->
 <circle cx="310.8" cy="15.8" r="10.5" fill="none" stroke="#a0a0a0" stroke-width="1"/>
 <path d="M305 15.8 H317 M309.5 11.5 L305 15.8 L309.5 20" stroke="#a5cd8a" stroke-width="2" fill="none"/>
 <circle cx="338.8" cy="15.8" r="10.5" fill="none" stroke="#a0a0a0" stroke-width="1"/>
 <path d="M344.5 15.8 H332.5 M340 11.5 L344.5 15.8 L340 20" stroke="#a5cd8a" stroke-width="2" fill="none"/>
 <!-- search icon -->
 <circle cx="535" cy="14" r="4" fill="none" stroke="#777" stroke-width="1.2"/>
 <path d="M538 17 L541.5 20.5" stroke="#777" stroke-width="1.4"/>
 <!-- theme -->
 <path d="M686.5 7 H697.5 L692 22 H686.5 Q685 22 685 20.5 V8.5 Q685 7 686.5 7Z" fill="#8cc063"/>
 <path d="M697.5 7 H700 L697.5 14 H695 Z" fill="#7e57c2"/>
 <rect x="701" y="7" width="7" height="7" fill="#5aaaf0"/>
 <path d="M694.5 15 H700 L698 22 H692 Z" fill="#f5a623"/>
 <rect x="701" y="15" width="7" height="3" fill="#ff8a65"/>
 <g transform="translate(703,21)">
  <circle r="4.6" fill="#7a7a7a"/>
  <path d="M-1.3 -6.5h2.6v2.2h-2.6zM-1.3 4.3h2.6v2.2h-2.6zM-6.5 -1.3v2.6h2.2v-2.6zM4.3 -1.3v2.6h2.2v-2.6z" fill="#7a7a7a"/>
  <path d="M-1.3 -6.5h2.6v2.2h-2.6zM-1.3 4.3h2.6v2.2h-2.6zM-6.5 -1.3v2.6h2.2v-2.6zM4.3 -1.3v2.6h2.2v-2.6z" fill="#7a7a7a" transform="rotate(45)"/>
  <circle r="2" fill="#d9d9d9"/>
 </g>
 <path d="M714.5 13.5 L717.5 16.5 L720.5 13.5" stroke="#2a2a2a" stroke-width="1.6" fill="none"/>
 <!-- fullscreen -->
 <rect x="730.5" y="6.5" width="21" height="18" rx="1" fill="#fff" stroke="#3d9cf0" stroke-width="1.1"/>
 <rect x="730" y="6" width="22" height="3" fill="#3d9cf0"/>
 <circle cx="745" cy="7.5" r=".6" fill="#fff"/><circle cx="747.5" cy="7.5" r=".6" fill="#fff"/><circle cx="750" cy="7.5" r=".6" fill="#fff"/>
 <g fill="#6ab42d">
  <path d="M733.9 9.9 H738.6 L733.9 14.6Z"/><path d="M748.9 9.9 H744.2 L748.9 14.6Z"/>
  <path d="M733.9 23.2 H738.6 L733.9 18.5Z"/><path d="M748.9 23.2 H744.2 L748.9 18.5Z"/>
 </g>
 <path d="M735 11 L738.6 14.6 M747.8 11 L744.2 14.6 M735 22.1 L738.6 18.5 M747.8 22.1 L744.2 18.5" stroke="#6ab42d" stroke-width="2.6" stroke-linecap="round"/>
 <!-- window controls -->
 <path d="M773 19.5 H785" stroke="#111" stroke-width="1.2"/>
 <rect x="817.6" y="10.6" width="10.8" height="10.8" fill="none" stroke="#111" stroke-width="1.2"/>
 <path d="M863 11.5 L872 20.5 M872 11.5 L863 20.5" stroke="#111" stroke-width="1.2"/>
</svg>
<div class="sep" style="left:756px;top:2px;height:27px"></div>

<!-- TABS -->
<div class="a" style="left:1px;top:31px;width:55px;height:30px;background:#ae4848;border-radius:3px 3px 0 0"></div>
<div class="tab" style="left:18px;color:#fff;letter-spacing:-0.333px">File</div>
<div class="tab" style="left:67px;letter-spacing:0.000px">Home</div>
<div class="sep" style="left:108px;top:37px;height:19px"></div>
<div class="tab" style="left:117px;letter-spacing:-0.333px">View</div>
<div class="sep" style="left:150px;top:37px;height:19px"></div>
<div class="tab" style="left:158px;letter-spacing:0.000px">Comment</div>
<div class="sep" style="left:220px;top:37px;height:19px"></div>
<div class="tab" style="left:228px;letter-spacing:-0.167px">Protect</div>
<div class="sep" style="left:273px;top:37px;height:19px"></div>
<div class="tab" style="left:282px;letter-spacing:0.000px">Form</div>
<div class="sep" style="left:318px;top:37px;height:19px"></div>
<div class="tab" style="left:327px;letter-spacing:-0.286px">Organize</div>
<div class="a" style="left:382px;top:31px;width:58px;height:30px;background:#f3f3f3;border-radius:3px 3px 0 0;box-shadow:-1px 0 1px rgba(0,0,0,.18),1px 0 2px rgba(0,0,0,.3)"></div>
<div class="a" style="left:388px;top:58px;width:46px;height:2px;background:#7890ab"></div>
<div class="tab" style="left:390px;color:#1f3a60;letter-spacing:-0.167px">Convert</div>
<div class="tab" style="left:448px;letter-spacing:-0.750px">Share</div>
<div class="sep" style="left:484px;top:37px;height:19px"></div>
<div class="tab" style="left:492px;letter-spacing:-0.600px">Review</div>
<div class="sep" style="left:536px;top:37px;height:19px"></div>
<div class="tab" style="left:544px;letter-spacing:-0.250px">Accessibility</div>
<div class="sep" style="left:615px;top:37px;height:19px"></div>
<div class="tab" style="left:623px;letter-spacing:-0.250px">Bookmarks</div>
<div class="sep" style="left:688px;top:37px;height:19px"></div>
<div class="tab" style="left:697px;letter-spacing:0.333px">Help</div>
<div class="sep" style="left:729px;top:37px;height:19px"></div>
<div class="a" style="left:732px;top:31px;width:74px;height:30px;background:#d8d0b0;border:1px solid #cfc39a;border-bottom:none"></div>
<div class="tab" style="left:750px;letter-spacing:-0.200px">Format</div>

<!-- RIBBON group separators -->
<div class="gsep" style="left:109px"></div>
<div class="gsep" style="left:272px"></div>
<div class="gsep" style="left:416px"></div>
<div class="gsep" style="left:605px"></div>
<div class="gsep" style="left:664px"></div>
<div class="gsep" style="left:775px"></div>
<div class="gsep" style="left:860px"></div>
<div class="glab" style="left:41px;letter-spacing:-0.500px">Tools</div>
<div class="glab" style="left:175px;letter-spacing:-0.400px">Create</div>
<div class="glab" style="left:327px;letter-spacing:0.400px">Modify</div>
<div class="glab" style="left:495px;letter-spacing:-0.240px">Export</div>
<div class="glab" style="left:624px;letter-spacing:-1.000px">OCR</div>
<div class="glab" style="left:682px;letter-spacing:-0.683px">Enhance Pages</div>
<div class="glab" style="left:780px;letter-spacing:-0.277px">Convert Colors</div>

<!-- Tools -->
<div class="a" style="left:2px;top:63px;width:61px;height:28px;background:#ead6a6;border:1px solid #cdb98c;border-radius:2px"></div>
<div class="rt" style="left:31px;top:71px;letter-spacing:0.667px">Hand</div>
<div class="rt" style="left:31px;top:99px;letter-spacing:-0.300px">Select Text</div>
<div class="rt" style="left:31px;top:127px;letter-spacing:-0.100px">Other Tools</div>
<!-- Create -->
<div class="rt" style="left:126px;top:119px;letter-spacing:-0.333px">Scan</div>
<div class="rt" style="left:177px;top:119px;letter-spacing:0.000px">From</div>
<div class="rt" style="left:174px;top:132px;letter-spacing:-0.550px">Files</div>
<div class="rt" style="left:228px;top:119px;letter-spacing:0.000px">Blank</div>
<!-- Modify -->
<div class="rt" style="left:305px;top:71px;letter-spacing:-0.500px">Rasterize Pages</div>
<div class="rt" style="left:305px;top:99px;letter-spacing:-0.250px">Recompress Images</div>
<div class="rt" style="left:305px;top:126px;letter-spacing:-0.334px">Replace Fonts</div>
<!-- Export -->
<div class="rt" style="left:422px;top:120px;letter-spacing:0.025px">Export to</div>
<div class="rt" style="left:423px;top:132px;letter-spacing:-0.029px">Image(s)</div>
<div class="rt" style="left:501px;top:71px;letter-spacing:-0.111px">To MS-Word</div>
<div class="rt" style="left:501px;top:99px;letter-spacing:-0.300px">To MS-Excel</div>
<div class="rt" style="left:501px;top:126px;letter-spacing:-0.133px">To MS-PowerPoint</div>
<!-- OCR -->
<div class="a" style="left:609px;top:63px;width:52px;height:84px;background:#f6dfa6;border:1px solid #e03c3c"></div>
<div class="rt" style="left:622px;top:119px;letter-spacing:-1.000px">OCR</div>
<div class="rt" style="left:615px;top:132px;letter-spacing:-0.367px">Page(s)</div>
<div class="rt" style="left:671px;top:119px;letter-spacing:-0.200px">Enhance</div>
<div class="rt" style="left:678px;top:132px;letter-spacing:-0.600px">Scans</div>
<div class="rt" style="left:726px;top:119px;letter-spacing:-0.520px">Deskew</div>
<div class="rt" style="left:730px;top:132px;letter-spacing:-0.500px">Pages</div>
<div class="rt" style="left:797px;top:119px;letter-spacing:-0.166px">Convert</div>
<div class="rt" style="left:801px;top:132px;letter-spacing:-0.160px">Colors</div>


<!-- RIBBON ICONS -->
<svg style="left:0;top:0" width="890" height="163">
 <!-- hand -->
 <path d="M12.3 80 V68.9 A1.45 1.45 0 0 1 15.2 68.9 V66.85 A1.65 1.65 0 0 1 18.5 66.85 V67.8 A1.6 1.6 0 0 1 21.7 67.8 V71.05 A1.55 1.55 0 0 1 24.8 71.05 V81 C24.8 86 21.5 88.5 17.5 88.5 C14 88.5 12.5 87 10.5 84.5 L7.6 80.8 C6.6 79.4 7.6 77.6 9.3 77.9 C10.5 78.1 11.5 79 12.3 80 Z" fill="#fff" stroke="#6d6d6d" stroke-width="1.1"/>
 <path d="M15.2 69 V75.5 M18.5 67 V75.5 M21.7 68 V75.5" stroke="#6d6d6d" stroke-width="1" fill="none"/>
 <!-- select text -->
 <rect x="4.2" y="97" width="9.7" height="13.8" fill="#7cc0f0"/>
 <path d="M5.8 99.5 H12.3 V101.5 M5.8 99.5 V101.5 M9 99.5 V108.3 M7.5 108.3 H10.5" stroke="#4a4040" stroke-width="1.4" fill="none"/>
 <path d="M13.5 95.8 H17.3 M15.4 95.8 V112 M13.5 112 H17.3" stroke="#555" stroke-width="1" fill="none"/>
 <path d="M18 98 L28 107.5 L23.5 107.8 L25.5 113 L23.5 114 L21.5 109 L18 112 Z" fill="#6a6a6a"/>
 <!-- other tools -->
 <g transform="translate(15.2,132)">
  <circle r="7.3" fill="none" stroke="#959595" stroke-width="3"/>
  <g fill="#8c8c8c">
   <rect x="-2" y="-10" width="4" height="4"/><rect x="-2" y="6" width="4" height="4"/><rect x="-10" y="-2" width="4" height="4"/><rect x="6" y="-2" width="4" height="4"/>
   <g transform="rotate(45)"><rect x="-2" y="-10" width="4" height="4"/><rect x="-2" y="6" width="4" height="4"/><rect x="-10" y="-2" width="4" height="4"/><rect x="6" y="-2" width="4" height="4"/></g>
  </g>
 </g>
 <path d="M16.5 133 L25.3 142.8" stroke="#3d9cf0" stroke-width="2.8" stroke-linecap="round"/>
 <path d="M16.5 133 L25.3 142.8" stroke="#a8d4f8" stroke-width="1" stroke-dasharray="1 1"/>
 <path d="M12.3 126.8 A4.6 4.6 0 1 0 18.6 132.2 L16 132.5 L13.5 130.5 L13.8 127.8Z" fill="#3d9cf0"/>
 <path d="M98.5 131 L101.5 134 L104.5 131" stroke="#333" stroke-width="1.4" fill="none"/>

 <!-- scan big -->
 <path d="M125.8 73.5 H152 L163.3 95.6 H114.6 Z" fill="#42a0f2"/>
 <path d="M125.8 73.5 H152 L114.6 95.6 Z" fill="#6ab6f6" opacity=".6"/>
 <rect x="133" y="77.8" width="11.6" height="3.8" rx="1" fill="#fff"/>
 <rect x="114.6" y="97.5" width="48.7" height="6.5" rx="3.2" fill="#6d6d6d"/>
 <rect x="117" y="96" width="44" height="2" fill="#fff" opacity=".9"/>
 <path d="M136 136.5 L139 139.5 L142 136.5" stroke="#333" stroke-width="1.4" fill="none"/>
 <!-- from files -->
 <path d="M168 73 H183 L188 78 V102.5 H168 Z" fill="#fff" stroke="#6d6d6d" stroke-width="1.8" stroke-linejoin="round"/>
 <path d="M182 73 L188 79 L183 79.5Z" fill="#555"/>
 <path d="M191 73 H206 L214 81 V102.5 H191 Z" fill="#fff" stroke="#6d6d6d" stroke-width="1.8" stroke-linejoin="round"/>
 <path d="M205 73 L214 82 L206.5 81Z" fill="#555"/>
 <path d="M172 83 H180 M172 88.5 H184 M172 94 H184 M195 83 H203 M195 88.5 H209 M195 94 H209" stroke="#777" stroke-width="1.4"/>
 <path d="M186.5 92 H192.5 V100 H198.5 L189.5 110.5 L180.5 100 H186.5 Z" fill="#3d9cf0"/>
 <path d="M200.5 138 L203.5 141 L206.5 138" stroke="#333" stroke-width="1.4" fill="none"/>
 <!-- blank -->
 <path d="M228 69.5 H250 L258.5 78.5 V106.5 Q258.5 109 256 109 H228 Q225.8 109 225.8 106.5 V72 Q225.8 69.5 228 69.5Z" fill="#fff" stroke="#6d6d6d" stroke-width="1.8"/>
 <path d="M249.5 69.5 C249 74 252 78.5 258.5 79 Z" fill="#555"/>

 <!-- rasterize -->
 <path d="M280.5 68 H289 V82 H280.5Z" fill="none" stroke="#888" stroke-width="1"/>
 <path d="M282.5 70 H291 V84 H282.5Z" fill="#fff" stroke="#888" stroke-width="1"/>
 <path d="M285 71 H294 L297 74 V85.5 H285Z" fill="#fff" stroke="#6d6d6d" stroke-width="1.2"/>
 <path d="M287.5 75 H292 M287.5 77.5 H293 M287.5 80 H293" stroke="#888" stroke-width=".9"/>
 <rect x="290.5" y="80" width="11" height="8.5" fill="#8fd0f5" stroke="#777" stroke-width="1"/>
 <path d="M291 88 L295 83 L297.5 85.5 L299.5 83.5 L301 85 V88Z" fill="#7cb342"/>
 <circle cx="293.5" cy="82.5" r="1" fill="#ffd54f"/>
 <!-- recompress -->
 <path d="M283.5 94 H301 V96.2 H286 Z" fill="#3d9cf0"/>
 <path d="M283.5 116 H301 V113.8 H286 Z" fill="#3d9cf0"/>
 <path d="M279 98.5 H291 V108 H279Z" fill="#fff" stroke="#888" stroke-width="1"/>
 <rect x="281" y="100.5" width="13" height="10" fill="#8fd0f5" stroke="#777" stroke-width="1"/>
 <path d="M281.5 110 L286 104 L289 107 L291 105 L293.5 108 V110Z" fill="#7cb342"/>
 <circle cx="284.5" cy="103.5" r="1.3" fill="#ffd54f"/>
 <path d="M296 98 L300.5 99.5 L296 101.5 L300.5 103 L296 105 L300.5 106.5 L296 108.5 L300.5 110 L296 112" stroke="#3d9cf0" stroke-width="1.1" fill="none"/>
 <!-- replace fonts -->
 <path d="M279 135.6 L283.3 122.1 H287.6 L291.8 135.6 H288.6 L287.7 132.5 H283.2 L282.3 135.6 Z M284 130 L285.45 125 L286.9 130 Z" fill="#72b043" fill-rule="evenodd"/>
 <path d="M296.2 127.8 H299.2 L300.1 142.4 H296.9 Z" fill="#555"/>
 <path d="M296.8 128.5 L289.2 142.2 M292.3 137.6 H298.6 M287.3 142.4 H291.5 M295.6 142.4 H301.2" stroke="#555" stroke-width="1.2" fill="none"/>
 <path d="M280.3 137.6 Q281.5 141 286 141" stroke="#3d9cf0" stroke-width="1.4" fill="none"/>
 <path d="M284.6 138.6 L287.6 141 L284.6 143.3Z" fill="#3d9cf0"/>
 <!-- export to image -->
 <path d="M427 86 L455.5 72.5 L461 84 L435 106.5 Z" fill="#fff" stroke="#777" stroke-width="1.3" stroke-linejoin="round"/>
 <rect x="434.4" y="82.4" width="32.8" height="25.2" fill="#8fd0f5" stroke="#777" stroke-width="1.3"/>
 <path d="M435 107 L447 91 L453 99 L457 95 L466.6 104 V107Z" fill="#7cb342"/>
 <path d="M435 107 V98 Q441 96 447 100 L437 107Z" fill="#9ccc65"/>
 <circle cx="443" cy="89" r="3" fill="#ffd54f"/>
 <path d="M461.5 82.4 L467.2 88 V82.4Z" fill="#555"/>
 <path d="M424 76.2 H437 L432.2 71.6 L434.6 70.3 L443.9 78 L434.6 85.7 L432.2 84.4 L437 79.8 H424 Q422.6 79.8 422.6 78 Q422.6 76.2 424 76.2Z" fill="#7b4fc4" stroke="#fff" stroke-width=".8" paint-order="stroke"/>
 <!-- word -->
 <path d="M479.5 66.5 H491.5 L496.5 71.5 V87.5 H479.5Z" fill="#fff" stroke="#888" stroke-width="1"/>
 <path d="M491.5 66.5 V71.5 H496.5" fill="none" stroke="#888" stroke-width="1"/>
 <path d="M485 74.5 H494 M485 77.5 H494 M485 80.5 H494 M485 83.5 H494" stroke="#777" stroke-width=".9"/>
 <rect x="474" y="70" width="10" height="15.6" fill="#2b579a"/>
 <text x="474.6" y="81.5" font-family="Liberation Sans" font-weight="bold" font-size="8.5" fill="#fff">W</text>
 <!-- excel -->
 <path d="M478.7 94.5 H491.5 L496.5 99.5 V115.5 H478.7Z" fill="#fff" stroke="#888" stroke-width="1"/>
 <rect x="474.1" y="97.8" width="9.6" height="15.1" fill="#217346"/>
 <text x="476" y="109" font-family="Liberation Sans" font-weight="bold" font-size="9" fill="#fff">X</text>
 <g fill="#5fae7f"><rect x="486" y="102" width="4.5" height="2"/><rect x="491.5" y="102" width="4.5" height="2"/><rect x="486" y="105" width="4.5" height="2"/><rect x="491.5" y="105" width="4.5" height="2"/><rect x="486" y="108" width="4.5" height="2"/><rect x="491.5" y="108" width="4.5" height="2"/><rect x="486" y="111" width="4.5" height="2"/><rect x="491.5" y="111" width="4.5" height="2"/></g>
 <!-- ppt -->
 <path d="M478.7 122.5 H491.5 L496.5 127.5 V143.5 H478.7Z" fill="#fff" stroke="#888" stroke-width="1"/>
 <rect x="474" y="126" width="10" height="15.2" fill="#d04a25"/>
 <text x="476" y="137.5" font-family="Liberation Sans" font-weight="bold" font-size="9" fill="#fff">P</text>
 <path d="M489.5 126 A3.8 3.8 0 1 0 493.3 129.8 H489.5Z" fill="#888"/>
 <path d="M486 137.5 H494.5 M486 140 H494.5" stroke="#f08a5d" stroke-width="1"/>

 <!-- OCR -->
 <path d="M620 69 H642 L650 83 V107 Q650 109 648 109 H620 Q618 109 618 107 V71 Q618 69 620 69Z" fill="#fff" stroke="#777" stroke-width="1.9"/>
 <path d="M641.5 69 C638.5 72 639.5 76 642 77 L650 83 Z" fill="#555"/>
 <path d="M623.5 87 V82.5 H628 M640 82.5 H644.5 V87 M623.5 99 V103.5 H628 M640 103.5 H644.5 V99" stroke="#f5a51c" stroke-width="1.7" fill="none"/>
 <path d="M629.5 90 V88.3 H638.5 V90 M634 88.3 V99.5 M631.5 99.5 H636.5" stroke="#777" stroke-width="1.6" fill="none"/>
 <!-- enhance -->
 <path d="M676 68.5 H699 L707 81 V108 Q707 110 705 110 H676 Q674 110 674 108 V70.5 Q674 68.5 676 68.5Z" fill="#fff" stroke="#777" stroke-width="1.8"/>
 <path d="M698.5 68.5 C695.5 72 697 76.5 700 77 L707 81 Z" fill="#555"/>
 <path d="M680 83 H702 M680 89 H702 M680 95 H700 M680 101 H693" stroke="#888" stroke-width="1.5"/>
 <path d="M700 97.5 H712 L718.2 109.9 H693.7 Z" fill="#42a0f2" stroke="#f3f3f3" stroke-width="1"/>
 <path d="M700 97.5 H712 L694 109.9Z" fill="#6ab6f6" opacity=".5"/>
 <rect x="703.5" y="99.5" width="4.5" height="2" rx=".8" fill="#fff"/>
 <rect x="694" y="111" width="24" height="3" rx="1.5" fill="#6d6d6d"/>
 <path d="M702 89.5 V94.5 M699.5 92 H704.5" stroke="#3d9cf0" stroke-width="1.4"/>
 <circle cx="711" cy="93" r="1.3" fill="#3d9cf0"/><circle cx="695.5" cy="98" r="1" fill="#3d9cf0"/>
 <!-- deskew -->
 <path d="M722.5 77 L750.5 66.7 L753 73 M722.5 77 L735.8 111" stroke="#888" stroke-width="1.6" stroke-dasharray="1.6 2" fill="none"/>
 <path d="M740 73.7 H760 L768 86 V109 Q768 111 766 111 H740 Q738 111 738 109 V75.7 Q738 73.7 740 73.7Z" fill="#fff" stroke="#777" stroke-width="1.8"/>
 <path d="M759.5 73.7 C756.5 77 758 81 761 82 L768 86 Z" fill="#555"/>
 <path d="M744.5 84.5 V82.5 H754.5 V84.5 M749.5 82.5 V93.5 M747 93.5 H752" stroke="#3d8fd8" stroke-width="1.9" fill="none"/>
 <path d="M744 99.5 H762 M744 105.5 H762" stroke="#3d8fd8" stroke-width="1.6"/>
 <path d="M731.7 89.5 H738 V85.4 L744 91.5 L738 97.6 V93.5 H731.7Z" fill="#7cb342"/>

 <!-- convert colors flower -->
 <path d="M814.90 90.90 L821.30 90.90 L824.70 75.10 A6.6 6.6 0 0 0 811.50 75.10 Z" fill="#ffd670" opacity=".85"/>
 <path d="M815.84 88.64 L820.36 93.16 L833.94 84.39 A6.6 6.6 0 0 0 824.61 75.06 Z" fill="#8bc163" opacity=".85"/>
 <path d="M818.10 87.70 L818.10 94.10 L833.90 97.50 A6.6 6.6 0 0 0 833.90 84.30 Z" fill="#64b5f6" opacity=".85"/>
 <path d="M820.36 88.64 L815.84 93.16 L824.61 106.74 A6.6 6.6 0 0 0 833.94 97.41 Z" fill="#9a7fd1" opacity=".85"/>
 <path d="M821.30 90.90 L814.90 90.90 L811.50 106.70 A6.6 6.6 0 0 0 824.70 106.70 Z" fill="#9e9e9e" opacity=".85"/>
 <path d="M820.36 93.16 L815.84 88.64 L802.26 97.41 A6.6 6.6 0 0 0 811.59 106.74 Z" fill="#b4b4b4" opacity=".85"/>
 <path d="M818.10 94.10 L818.10 87.70 L802.30 84.30 A6.6 6.6 0 0 0 802.30 97.50 Z" fill="#ff8a6a" opacity=".85"/>
 <path d="M815.84 93.16 L820.36 88.64 L811.59 75.06 A6.6 6.6 0 0 0 802.26 84.39 Z" fill="#ffb150" opacity=".85"/>
 <circle cx="818.1" cy="90.9" r="4" fill="#fff"/>
 <!-- tab row icons -->
 <path d="M811 35.6 H822 L826 39.6 V55.2 H811Z" fill="#fff" stroke="#777" stroke-width="1.1" stroke-linejoin="round"/>
 <path d="M821.5 35.6 C821 38 822.5 40 826 40Z" fill="#555"/>
 <path d="M814 41.5 H819 M814 44.5 H822 M814 47.5 H821 M814 50.5 H820" stroke="#888" stroke-width=".9"/>
 <g><path d="M823.3 48 H826.5 L827.1 57.6 H822.5Z M828.9 48 H832.1 L832.9 57.6 H828.3Z" fill="#707070"/><rect x="826.3" y="50" width="3" height="3.5" fill="#5a5a5a"/>
 <path d="M823.3 47.8 H826.5 M828.9 47.8 H832.1 M822.6 57.2 H827.0 M828.4 57.2 H832.8" stroke="#3d9cf0" stroke-width="1"/></g>
 <path d="M838.5 37 H845 L846.5 38.5 H852 V53 H838.5Z" fill="#fff" stroke="#f5a51c" stroke-width="1.1"/>
 <path d="M838.5 53 L842 43.5 H861 L857 53Z" fill="#ffd356"/>
 <g><path d="M851.3 48 H854.5 L855.1 57.6 H850.5Z M856.9 48 H860.1 L860.9 57.6 H856.3Z" fill="#707070"/><rect x="854.3" y="50" width="3" height="3.5" fill="#5a5a5a"/>
 <path d="M851.3 47.8 H854.5 M856.9 47.8 H860.1 M850.6 57.2 H855.0 M856.4 57.2 H860.8" stroke="#3d9cf0" stroke-width="1"/></g>
 <path d="M876.5 45 L880.6 40.6 L884.7 45" stroke="#333" stroke-width="1.4" fill="none"/>
</svg>


<!-- SIDEBAR -->
<div class="a" style="left:1px;top:198px;width:31px;height:11px;background:#e4e4e4"></div>
<svg style="left:0;top:0" width="890" height="612">
 <defs>
  <pattern id="dots" x="0" y="1" width="2" height="2" patternUnits="userSpaceOnUse"><rect x="0" y="0" width="1" height="1" fill="#9c9c9c"/></pattern><pattern id="dots2" x="0" y="0" width="2" height="2" patternUnits="userSpaceOnUse"><rect x="0" y="0" width="1" height="1" fill="#9c9c9c"/></pattern>
 </defs>
 <path d="M24.5 200.5 V206.5 M30 200.5 L26.5 203.5 L30 206.5" stroke="#333" stroke-width="1.2" fill="none"/>
 <rect x="4" y="211" width="26" height="10" fill="url(#dots)"/>
 <!-- bookmark -->
 <path d="M9 225 H20 V245 L14.5 239.5 L9 245Z" fill="#42a0f2"/>
 <path d="M9 225 H20 L9 236Z" fill="#70b8f6"/>
 <rect x="20" y="225.5" width="2.5" height="7" fill="#2c7fd0"/>
 <!-- pages -->
 <path d="M6.5 252.5 H17 V267.5 H6.5Z" fill="#fff" stroke="#666" stroke-width="1"/>
 <path d="M10.5 255.5 H21 V270.5 H10.5Z" fill="#fff" stroke="#666" stroke-width="1"/>
 <path d="M14.5 259 H23 L26.5 262.5 V273.5 H14.5Z" fill="#fff" stroke="#666" stroke-width="1.1"/>
 <path d="M23 259 L26.5 262.5 L23 263Z" fill="#555"/>
 <path d="M17 264.5 H21 M17 267.5 H24 M17 270.5 H24" stroke="#777" stroke-width=".9"/>
 <!-- comment -->
 <path d="M6 281 H26 Q27 281 27 282 V295 Q27 296 26 296 H15 L10.5 301.5 V296 H6 Q5 296 5 295 V282 Q5 281 6 281Z" fill="#ffd864"/>
 <path d="M5 292 L17 281 H27 V283 L14 296 H10 Z" fill="#ffe08a" opacity=".5"/>
 <path d="M8 285.5 H24 M8 288.5 H24 M8 291.5 H24" stroke="#f0a830" stroke-width=".9"/>
 <circle cx="28" cy="303.5" r="1.6" fill="#6ab42d"/>
 <!-- paperclip -->
 <path d="M13 318 L21.5 310.5 A2.6 2.6 0 0 1 25 314 L12 325.5 A4 4 0 0 1 6.5 320 L18 309.8" stroke="#a4a4a4" stroke-width="1.4" fill="none" stroke-linecap="round"/>
 <circle cx="28" cy="330.5" r="1.6" fill="#6ab42d"/>
 <!-- form doc -->
 <path d="M8 336.5 H19.5 L23.5 340.5 V356.5 H8Z" fill="#fff" stroke="#666" stroke-width="1.1"/>
 <path d="M19.5 336.5 L23.5 340.5 L19.5 341Z" fill="#555"/>
 <rect x="10.5" y="339.5" width="2.5" height="2.5" fill="none" stroke="#3d9cf0" stroke-width=".9"/>
 <rect x="10.5" y="344" width="2.5" height="2.5" fill="none" stroke="#3d9cf0" stroke-width=".9"/>
 <path d="M14.5 340.5 H19 M14.5 345 H21 M10.5 348.5 H21" stroke="#777" stroke-width=".9"/>
 <rect x="10.5" y="351" width="10.5" height="2.5" fill="none" stroke="#3d9cf0" stroke-width="1"/>
 <!-- certificate -->
 <path d="M8 364.5 H19.5 L23.5 368.5 V384.5 H8Z" fill="#fff" stroke="#666" stroke-width="1.1"/>
 <path d="M19.5 364.5 L23.5 368.5 L19.5 369Z" fill="#555"/>
 <circle cx="13" cy="371.5" r="2.8" fill="#ff7043"/><circle cx="13" cy="371.5" r="1.4" fill="#ffd54f"/>
 <path d="M11.5 374 L10.5 378 M14.5 374 L15.5 378" stroke="#ff7043" stroke-width="1.3"/>
 <path d="M17 372 H21 M17 375 H21 M10.5 380.5 H21" stroke="#777" stroke-width=".9"/>
 <!-- layers -->
 <path d="M16 400 L27 405.5 L16 411 L5 405.5Z" fill="#2f8ae2" stroke="#f0f0f0" stroke-width=".7"/>
 <path d="M16 396.5 L27 402 L16 407.5 L5 402Z" fill="#3d9cf0" stroke="#f0f0f0" stroke-width=".7"/>
 <path d="M16 393 L27 398.5 L16 404 L5 398.5Z" fill="#5aaef5" stroke="#f0f0f0" stroke-width=".7"/>
 <!-- doc shapes -->
 <path d="M8 420.5 H19.5 L23.5 424.5 V440.5 H8Z" fill="#fff" stroke="#666" stroke-width="1.1"/>
 <path d="M19.5 420.5 L23.5 424.5 L19.5 425Z" fill="#555"/>
 <rect x="12" y="422" width="4" height="4" fill="#3d9cf0"/>
 <path d="M16.5 423.5 L20 429.5 H13Z" fill="#7cb342"/>
 <circle cx="12" cy="428.5" r="2.6" fill="#ffd54f"/>
 <path d="M9.5 432.5 H14.5 M12 432.5 V438.5 M10.5 438.5 H13.5" stroke="#444" stroke-width="1.1"/>
 <path d="M16 434 H21.5 M16 436.5 H21.5" stroke="#777" stroke-width=".9"/>
 <!-- pins -->
 <path d="M20 447 A6.5 6.5 0 0 1 26.5 453.5 C26.5 457.5 22.5 462 20 466 C19 464.5 18 463 17 461.5" fill="none" stroke="#a0a0a0" stroke-width="2.8"/>
 <path d="M13.5 450 A6.5 6.5 0 0 1 20 447" fill="none" stroke="#a0a0a0" stroke-width="2.8"/>
 <path d="M12.5 450.5 A7 7 0 0 1 19.5 457.5 C19.5 462 15 467 12.5 470.5 C10 467 5.5 462 5.5 457.5 A7 7 0 0 1 12.5 450.5Z" fill="#42a0f2" stroke="#f0f0f0" stroke-width=".8"/>
 <circle cx="12.5" cy="457.5" r="2.8" fill="#fff"/>
 <circle cx="28" cy="471" r="1.6" fill="#6ab42d"/>
 <!-- tree -->
 <rect x="7.3" y="476.5" width="4" height="4" fill="#e8462a" stroke="#3d9cf0" stroke-width=".7"/>
 <path d="M9.5 480.5 V495.2 M9.5 483 H20.5 M9.5 489.2 H20.5 M9.5 495.2 H20.5" stroke="#888" stroke-width="1"/>
 <rect x="20.5" y="481" width="4.2" height="4" fill="#ffd54f" stroke="#3d9cf0" stroke-width=".8"/>
 <rect x="20.5" y="487.2" width="4.2" height="4" fill="#ffd54f" stroke="#3d9cf0" stroke-width=".8"/>
 <rect x="20.5" y="493.2" width="4.2" height="4" fill="#ffd54f" stroke="#3d9cf0" stroke-width=".8"/>
 <!-- link -->
 <path d="M17 507.5 L20.5 504.5 A3.5 3.5 0 0 1 25.5 509.5 L21 514.5 A3.5 3.5 0 0 1 17 515" stroke="#9e9e9e" stroke-width="2.4" fill="none" stroke-linecap="round"/>
 <path d="M15 512 L11 515.5 A3.5 3.5 0 0 0 7 520.5 A3.5 3.5 0 0 0 12 522.5 L16.5 518 " stroke="#f5a51c" stroke-width="2.6" fill="none" stroke-linecap="round"/>
 <path d="M2 530.5 H30" stroke="#cfcfcf" stroke-width="1"/>
 <!-- tag -->
 <path d="M18.5 537.5 H26 V545 L15 556 Q14 557 13 556 L6.5 549.5 Q5.5 548.5 6.5 547.5Z" fill="#ffd59a" stroke="#42a0f2" stroke-width="1.4"/>
 <circle cx="22" cy="541.5" r="1.6" fill="#fff"/>
 <circle cx="28" cy="559" r="1.6" fill="#6ab42d"/>
 <!-- z grid -->
 <g fill="none" stroke="#42a0f2" stroke-width="1">
  <rect x="5.5" y="564.3" width="9.5" height="9.5" rx=".5"/><rect x="17.5" y="564.3" width="9.5" height="9.5" rx=".5"/>
  <rect x="5.5" y="576.3" width="9.5" height="9.5" rx=".5"/><rect x="17.5" y="576.3" width="9.5" height="9.5" rx=".5"/>
 </g>
 <path d="M8 569 H24 L8 580.7 H24" stroke="#f5a51c" stroke-width="1.6" fill="none"/>
 <path d="M13 591 L16 594 L19 591 M13 595 L16 598 L19 595" stroke="#333" stroke-width="1.4" fill="none"/>
</svg>

<!-- DOC TABS -->
<div class="a" style="left:1px;top:164px;width:92px;height:32px;background:#f9e7bb;border-radius:3px 3px 0 0"></div>
<div class="t" style="left:6px;top:174px;font-size:12px;color:#111;letter-spacing:0.000px">Architecture</div>
<div class="a" style="left:6px;top:193px;width:82px;height:2px;background:#ab9d7c;border-radius:1px"></div>
<div class="a" style="left:95px;top:167px;width:27px;height:27px;background:#c9c9c9;border-radius:3px"></div>
<div class="a" style="left:858px;top:165px;width:30px;height:29px;background:#c9c9c9;border-radius:3px"></div>
<svg style="left:0;top:0" width="890" height="612">
 <path d="M82.3 170.3 L87.2 175.2 M87.2 170.3 L82.3 175.2" stroke="#111" stroke-width="1.25"/>
 <path d="M101 180.5 H116 M108.5 173 V188" stroke="#222" stroke-width="1.1"/>
 <path d="M867.5 173.7 L879.3 185 M879.3 173.7 L867.5 185" stroke="#111" stroke-width="1.3"/>
 <!-- scrollbar -->
 <path d="M878.5 208 L881.5 205 L884.5 208" stroke="#555" stroke-width="1.2" fill="none"/>
 <rect x="879" y="213" width="4.8" height="15.7" rx="2.4" fill="#8a8a8a"/>
 <path d="M878.5 570 L881.5 573 L884.5 570" stroke="#555" stroke-width="1.2" fill="none"/>
 <!-- BOTTOM BAR -->
 <rect x="34" y="584" width="10" height="15" fill="url(#dots2)"/>
 <path d="M35.5 602 V608 M41 602 L37.5 605 L41 608" stroke="#333" stroke-width="1.2" fill="none"/>
 <g transform="translate(53.5,591.5)">
  <circle r="4.3" fill="none" stroke="#8a8a8a" stroke-width="2.6"/>
  <g fill="#8a8a8a"><rect x="-1.5" y="-7.3" width="3" height="3"/><rect x="-1.5" y="4.3" width="3" height="3"/><rect x="-7.3" y="-1.5" width="3" height="3"/><rect x="4.3" y="-1.5" width="3" height="3"/>
  <g transform="rotate(45)"><rect x="-1.5" y="-7.3" width="3" height="3"/><rect x="-1.5" y="4.3" width="3" height="3"/><rect x="-7.3" y="-1.5" width="3" height="3"/><rect x="4.3" y="-1.5" width="3" height="3"/></g></g>
 </g>
 <g transform="translate(62.5,600.5)">
  <circle r="4.3" fill="none" stroke="#f7a829" stroke-width="2.6"/>
  <g fill="#f7a829"><rect x="-1.5" y="-7.3" width="3" height="3"/><rect x="-1.5" y="4.3" width="3" height="3"/><rect x="-7.3" y="-1.5" width="3" height="3"/><rect x="4.3" y="-1.5" width="3" height="3"/>
  <g transform="rotate(45)"><rect x="-1.5" y="-7.3" width="3" height="3"/><rect x="-1.5" y="4.3" width="3" height="3"/><rect x="-7.3" y="-1.5" width="3" height="3"/><rect x="4.3" y="-1.5" width="3" height="3"/></g></g>
 </g>
 <path d="M75.5 593.5 L78.5 596.5 L81.5 593.5" stroke="#222" stroke-width="1.5" fill="none"/>
 <path d="M85.5 582 V609" stroke="#c4c4c4" stroke-width="1"/>
 <path d="M91.5 591.5 L94.5 594.5 L97.5 591.5 M91.5 595.5 L94.5 598.5 L97.5 595.5" stroke="#333" stroke-width="1.4" fill="none"/>
 <!-- page nav -->
 <rect x="233" y="584" width="10" height="15" fill="url(#dots2)"/>
 <path d="M234.5 602 V608 M240 602 L236.5 605 L240 608" stroke="#333" stroke-width="1.2" fill="none"/>
 <circle cx="256.8" cy="595.6" r="10.6" fill="none" stroke="#c2c2c2" stroke-width="1"/>
 <path d="M252.5 590.5 V600.5 M261 590.5 L256 595.5 L261 600.5" stroke="#8cc4f2" stroke-width="2" fill="none"/>
 <circle cx="284.7" cy="595.6" r="10.6" fill="none" stroke="#c2c2c2" stroke-width="1"/>
 <path d="M287 590.5 L282 595.5 L287 600.5" stroke="#8cc4f2" stroke-width="2" fill="none"/>
 <rect x="300.5" y="584.5" width="89" height="22" rx="2" fill="#fff" stroke="#b8b8b8" stroke-width="1"/>
 <circle cx="404.8" cy="595.6" r="10.6" fill="none" stroke="#707070" stroke-width="1"/>
 <path d="M402.5 590.5 L407.5 595.5 L402.5 600.5" stroke="#2d8ae8" stroke-width="2" fill="none"/>
 <circle cx="433" cy="595.6" r="10.6" fill="none" stroke="#707070" stroke-width="1"/>
 <path d="M428.5 590.5 L433.5 595.5 L428.5 600.5 M437.5 590.5 V600.5" stroke="#2d8ae8" stroke-width="2" fill="none"/>
 <path d="M448.5 582 V609" stroke="#c4c4c4" stroke-width="1"/>
 <circle cx="465" cy="595.6" r="10.6" fill="none" stroke="#c2c2c2" stroke-width="1"/>
 <path d="M459.5 595.5 H470.5 M464 590.8 L459.5 595.5 L464 600.2" stroke="#a5cd8a" stroke-width="2" fill="none"/>
 <path d="M483 591.5 L486 594.5 L489 591.5 M483 595.5 L486 598.5 L489 595.5" stroke="#333" stroke-width="1.4" fill="none"/>
 <rect x="494" y="584" width="9" height="15" fill="url(#dots2)"/>
 <path d="M495 602 V608 M500.5 602 L497 605 L500.5 608" stroke="#333" stroke-width="1.2" fill="none"/>
 <!-- single page -->
 <path d="M510 585.5 H519.5 L524 590 V605.5 H510Z" fill="#fff" stroke="#666" stroke-width="1"/>
 <path d="M519.5 585.5 L524 590 L520 590.5Z" fill="#555"/>
 <!-- continuous selected -->
 <rect x="531" y="582" width="28" height="27" rx="1" fill="#ead6a6" stroke="#d3bf90" stroke-width="1"/>
 <path d="M536.5 585.5 H553.5 V593.5 H536.5Z" fill="#fff" stroke="#555" stroke-width="1.1"/>
 <path d="M536.5 597.5 H549 L553.5 602 V605.5 H536.5Z" fill="#fff" stroke="#555" stroke-width="1.1"/>
 <path d="M549 597.5 L553.5 602 L549.5 602.5Z" fill="#444"/>
 <!-- two pages -->
 <path d="M561.5 589.5 H568.5 L572 593 V603.5 H561.5Z" fill="#fff" stroke="#666" stroke-width="1"/>
 <path d="M568.5 589.5 L572 593 L569 593.5Z" fill="#555"/>
 <path d="M574.5 589.5 H581.5 L585 593 V603.5 H574.5Z" fill="#fff" stroke="#666" stroke-width="1"/>
 <path d="M581.5 589.5 L585 593 L582 593.5Z" fill="#555"/>
 <path d="M590.5 591.5 L593.5 594.5 L596.5 591.5 M590.5 595.5 L593.5 598.5 L596.5 595.5" stroke="#333" stroke-width="1.4" fill="none"/>
 <rect x="601" y="584" width="10" height="15" fill="url(#dots2)"/>
 <path d="M603 602 V608 M608.5 602 L605 605 L608.5 608" stroke="#333" stroke-width="1.2" fill="none"/>
 <rect x="612.5" y="584.5" width="81" height="22" rx="2" fill="#fff" stroke="#b8b8b8" stroke-width="1"/>
 <path d="M683 593.5 L686 596.5 L689 593.5" stroke="#333" stroke-width="1.4" fill="none"/>
 <path d="M696.5 582 V609" stroke="#c4c4c4" stroke-width="1"/>
 <!-- zoom slider -->
 <circle cx="713" cy="595.6" r="10.8" fill="#fff" stroke="#707070" stroke-width="1"/>
 <path d="M707.5 595.6 H718.5" stroke="#3d9cf0" stroke-width="1.5"/>
 <rect x="729" y="594.5" width="100" height="2.5" rx="1.2" fill="#c8c8c8"/>
 <rect x="729" y="594.5" width="22" height="2.5" rx="1.2" fill="#888"/>
 <circle cx="758.3" cy="595.6" r="9.2" fill="#f4f4f4" stroke="#6a6a6a" stroke-width="1.2"/>
 <circle cx="758.3" cy="595.6" r="3.4" fill="#888"/>
 <path d="M778.5 590 V601" stroke="#777" stroke-width="1" stroke-dasharray="1 2"/>
 <path d="M834 591.5 L837 594.5 L840 591.5 M834 595.5 L837 598.5 L840 595.5" stroke="#333" stroke-width="1.4" fill="none"/>
 <rect x="845" y="584" width="10" height="15" fill="url(#dots2)"/>
 <path d="M846.5 602 V608 M852 602 L848.5 605 L852 608" stroke="#333" stroke-width="1.2" fill="none"/>
 <path d="M869 591.5 L872 594.5 L875 591.5 M869 595.5 L872 598.5 L875 595.5" stroke="#333" stroke-width="1.4" fill="none"/>
 <rect x="878" y="580" width="11" height="31" fill="#e6e6e6"/>
 <path d="M880 581.5 L883 584.5 L886 581.5 M880 587.5 H886" stroke="#333" stroke-width="1.2" fill="none"/>
</svg>
<svg style="left:0;top:0" width="890" height="612"><path d="M370.3 602.5 L374.6 589.5" stroke="#555" stroke-width="1"/><path d="M365.8 591 V600 M363 593.2 L365.8 591" stroke="#2a2a2a" stroke-width="1.3" fill="none"/></svg>
<div class="t" style="left:376.5px;top:588px;font-size:9.5px;color:#3a3a3a;letter-spacing:-.3px">10</div>
<div class="t" style="left:617px;top:590.5px;font-size:12px;color:#111;letter-spacing:-.6px">50%</div>
</body></html>
